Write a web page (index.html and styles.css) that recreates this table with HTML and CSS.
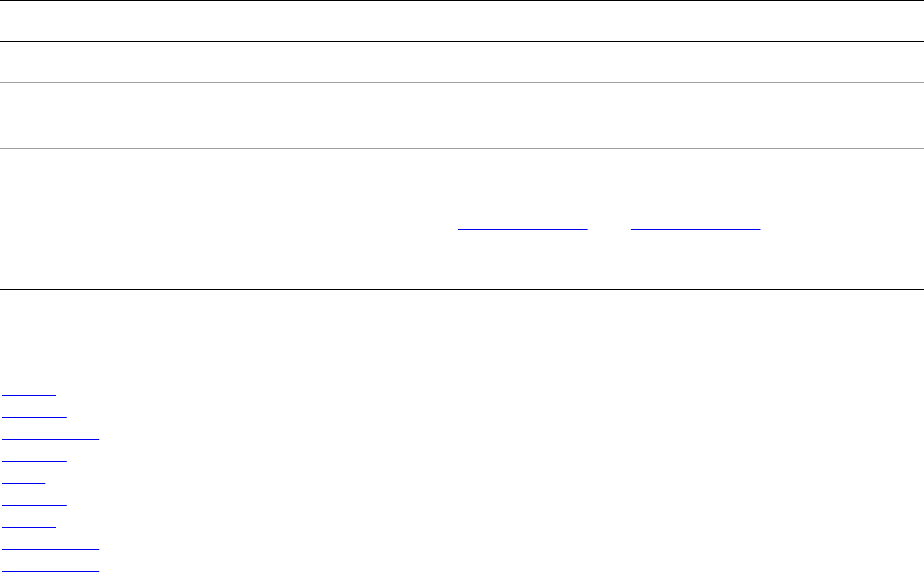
FILE: index.html
```html
<!DOCTYPE html>
<html lang="en">
<head>
    <meta charset="UTF-8">
    <meta name="viewport" content="width=device-width, initial-scale=1.0">
    <title>Site Directory</title>
    <link rel="stylesheet" href="styles.css">
</head>
<body>
    <header class="top-bar">
        <h1>Site Directory</h1>
    </header>

    <div class="band">
        <p>Welcome</p>
    </div>

    <div class="band band-tall">
        <p>Browse the sections below</p>
    </div>

    <!-- notice row -->
    <div class="notice">
        <p><a href="#">Privacy info</a> or <a href="#">Terms of use</a></p>
    </div>

    <ul class="nav-list">
        <li><a href="#">About</a></li>
        <li><a href="#">Search</a></li>
        <li><a href="#">Downloads</a></li>
        <li><a href="#">Forums</a></li>
        <li><a href="#">Help</a></li>
        <li><a href="#">Topics</a></li>
        <li><a href="#">Login</a></li>
        <li><a href="#">Documents</a></li>
        <li><a href="#">Community</a></li>
    </ul>
</body>
</html>
```

FILE: styles.css
```css
body {
    font-family: "Liberation Mono", monospace;
    font-size: 18px;
    line-height: 22px;
    color: transparent;
    background-color: #fff;
    margin: 0;
    padding: 0;
}
a {
    color: transparent;
    text-decoration: underline;
    text-decoration-color: #0000ee;
    text-decoration-thickness: 1px;
    text-decoration-skip-ink: none;
}
p, h1 {
    margin: 0;
}
.top-bar {
    border-top: 1px solid #000;
    border-bottom: 1px solid #000;
    height: 40px;
}
.top-bar h1 {
    font-size: 18px;
    font-weight: normal;
    padding: 9px 2px;
}
.band {
    height: 40px;
    border-bottom: 1px solid #a0a0a0;
}
.band p {
    padding: 9px 2px;
}
.band-tall {
    height: 65px;
}
.notice {
    box-sizing: border-box;
    height: 141px;
    border-bottom: 1px solid #000;
    padding-top: 63px;
    padding-left: 458px;
}
.nav-list {
    list-style: none;
    margin: 0;
    padding: 88px 0 0 2px;
}
```
